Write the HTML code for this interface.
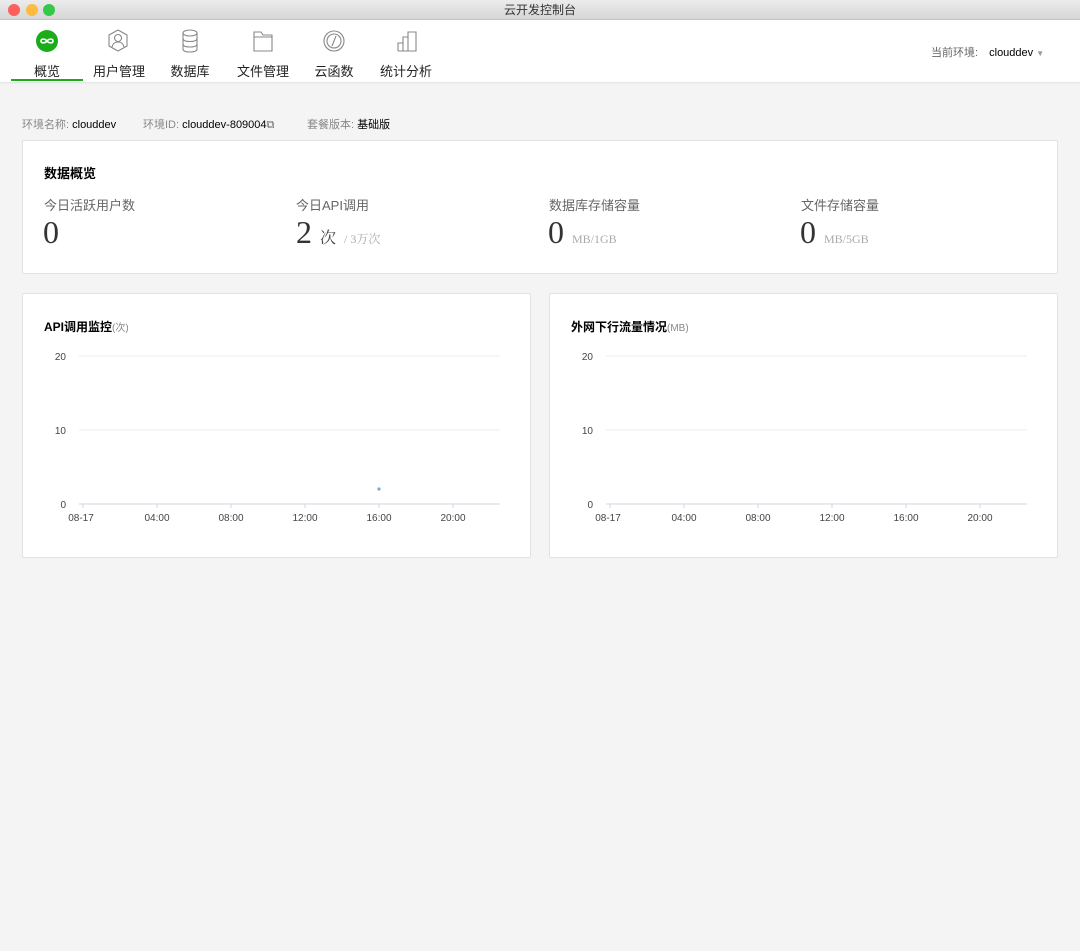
<!DOCTYPE html>
<html><head><meta charset="utf-8"><style>
*{margin:0;padding:0;box-sizing:border-box}
body{width:1080px;height:951px;background:#f4f4f4;font-family:"Liberation Sans","Noto Sans CJK SC",sans-serif;position:relative;overflow:hidden;color:#000}
.a{position:absolute;white-space:nowrap}
.title{left:0;top:0;width:1080px;height:20px;background:linear-gradient(#ececec,#d6d6d6);border-bottom:1px solid #c4c4c4;text-align:center;font-size:12px;line-height:20px;color:#333}
.dot{width:12px;height:12px;border-radius:50%;top:4px}
.nav{left:0;top:20px;width:1080px;height:62px;background:#fff;box-shadow:0 1px 2px rgba(0,0,0,.08)}
.tab{font-size:13px;color:#222;top:61px;transform:translateX(-50%)}
.card{background:#fff;border:1px solid #e2e2e2;border-radius:2px}
.lbl{font-size:13px;color:#666}
.big{font-family:"Liberation Serif",serif;font-size:32px;color:#333}
.unit{font-size:12px;color:#aaa;font-family:"Liberation Serif","Noto Serif CJK SC",serif}
.ax{font-size:10px;color:#444}
</style></head><body>
<div class="a title">云开发控制台</div>
<div class="a dot" style="left:8px;background:#fc605c"></div>
<div class="a dot" style="left:26px;background:#fdbc40"></div>
<div class="a dot" style="left:43px;background:#34c84a"></div>
<div class="a nav"></div>
<svg class="a" style="left:0;top:20px" width="450" height="62">
<circle cx="47" cy="21" r="11" fill="#1aad19"/>
<path d="M47 21c-2-2.5-6-2.5-6 0s4 2.5 6 0 6-2.5 6 0-4 2.5-6 0" fill="none" stroke="#fff" stroke-width="1.6"/>
<g fill="none" stroke="#888" stroke-width="1.1">
<path d="M118 10l9 5v11l-9 5-9-5V15z"/><circle cx="118" cy="18" r="3.5"/><path d="M112 27c1-4 3-5 6-5s5 1 6 5"/>
<ellipse cx="190" cy="13" rx="7" ry="3"/><path d="M183 13v16c0 2 3 3 7 3s7-1 7-3V13M183 18.5c0 2 3 3 7 3s7-1 7-3M183 24c0 2 3 3 7 3s7-1 7-3"/>
<path d="M254 12h7l2 3h9v16h-18zM254 17h18"/>
<circle cx="334" cy="21" r="10"/><circle cx="334" cy="21" r="7"/><path d="M336 16l-4 10"/>
<path d="M398 31V23h5v8M403 31V17h5v14M408 31V12h8v19h-18"/>
</g>
<rect x="11" y="59" width="72" height="2" fill="#1aad19"/>
</svg>
<div class="a tab" style="left:47px">概览</div>
<div class="a tab" style="left:119px">用户管理</div>
<div class="a tab" style="left:190px">数据库</div>
<div class="a tab" style="left:263px">文件管理</div>
<div class="a tab" style="left:334px">云函数</div>
<div class="a tab" style="left:406px">统计分析</div>
<div class="a" style="left:931px;top:44px;font-size:11px;color:#666">当前环境: <span style="color:#000;margin-left:8px">clouddev</span> <span style="color:#999;font-size:8px">▼</span></div>

<div class="a" style="left:22px;top:116px;font-size:11px;color:#888">环境名称: <span style="color:#000">clouddev</span></div>
<div class="a" style="left:143px;top:116px;font-size:11px;color:#888">环境ID: <span style="color:#000">clouddev-809004</span><span style="color:#666">⧉</span></div>
<div class="a" style="left:307px;top:116px;font-size:11px;color:#888">套餐版本: <span style="color:#000">基础版</span></div>

<div class="a card" style="left:22px;top:140px;width:1036px;height:134px"></div>
<div class="a" style="left:44px;top:163px;font-size:13px;font-weight:bold">数据概览</div>
<div class="a lbl" style="left:44px;top:195px">今日活跃用户数</div>
<div class="a lbl" style="left:296px;top:195px">今日API调用</div>
<div class="a lbl" style="left:549px;top:195px">数据库存储容量</div>
<div class="a lbl" style="left:801px;top:195px">文件存储容量</div>
<div class="a big" style="left:43px;top:214px">0</div>
<div class="a big" style="left:296px;top:214px">2 <span style="font-size:16px;color:#444;font-family:'Noto Serif CJK SC',serif">次</span> <span class="unit">/ 3万次</span></div>
<div class="a big" style="left:548px;top:214px">0 <span class="unit">MB/1GB</span></div>
<div class="a big" style="left:800px;top:214px">0 <span class="unit">MB/5GB</span></div>

<div class="a card" style="left:22px;top:293px;width:509px;height:265px"></div>
<div class="a card" style="left:549px;top:293px;width:509px;height:265px"></div>
<div class="a" style="left:44px;top:318px;font-size:12px;font-weight:bold">API调用监控<span style="font-weight:normal;color:#888;font-size:10px">(次)</span></div>
<div class="a" style="left:571px;top:318px;font-size:12px;font-weight:bold">外网下行流量情况<span style="font-weight:normal;color:#888;font-size:10px">(MB)</span></div>
<svg class="a" style="left:0;top:340px" width="1080" height="190">
<g id="c" font-family="Liberation Sans, sans-serif" font-size="10" fill="#444">
<line x1="79" y1="16" x2="500" y2="16" stroke="#eee"/>
<line x1="79" y1="90" x2="500" y2="90" stroke="#eee"/>
<line x1="79" y1="164" x2="500" y2="164" stroke="#d0d6e2"/>
<text x="66" y="20" text-anchor="end">20</text><text x="66" y="94" text-anchor="end">10</text><text x="66" y="168" text-anchor="end">0</text>
<g stroke="#d0d6e2"><line x1="83" y1="164" x2="83" y2="168"/><line x1="157" y1="164" x2="157" y2="168"/><line x1="231" y1="164" x2="231" y2="168"/><line x1="305" y1="164" x2="305" y2="168"/><line x1="379" y1="164" x2="379" y2="168"/><line x1="453" y1="164" x2="453" y2="168"/></g>
<text x="81" y="181" text-anchor="middle">08-17</text><text x="157" y="181" text-anchor="middle">04:00</text><text x="231" y="181" text-anchor="middle">08:00</text><text x="305" y="181" text-anchor="middle">12:00</text><text x="379" y="181" text-anchor="middle">16:00</text><text x="453" y="181" text-anchor="middle">20:00</text>
</g>
<circle cx="379" cy="149" r="1.6" fill="#7aa7d6"/>
<use href="#c" x="527"/>
</svg>
</body></html>
